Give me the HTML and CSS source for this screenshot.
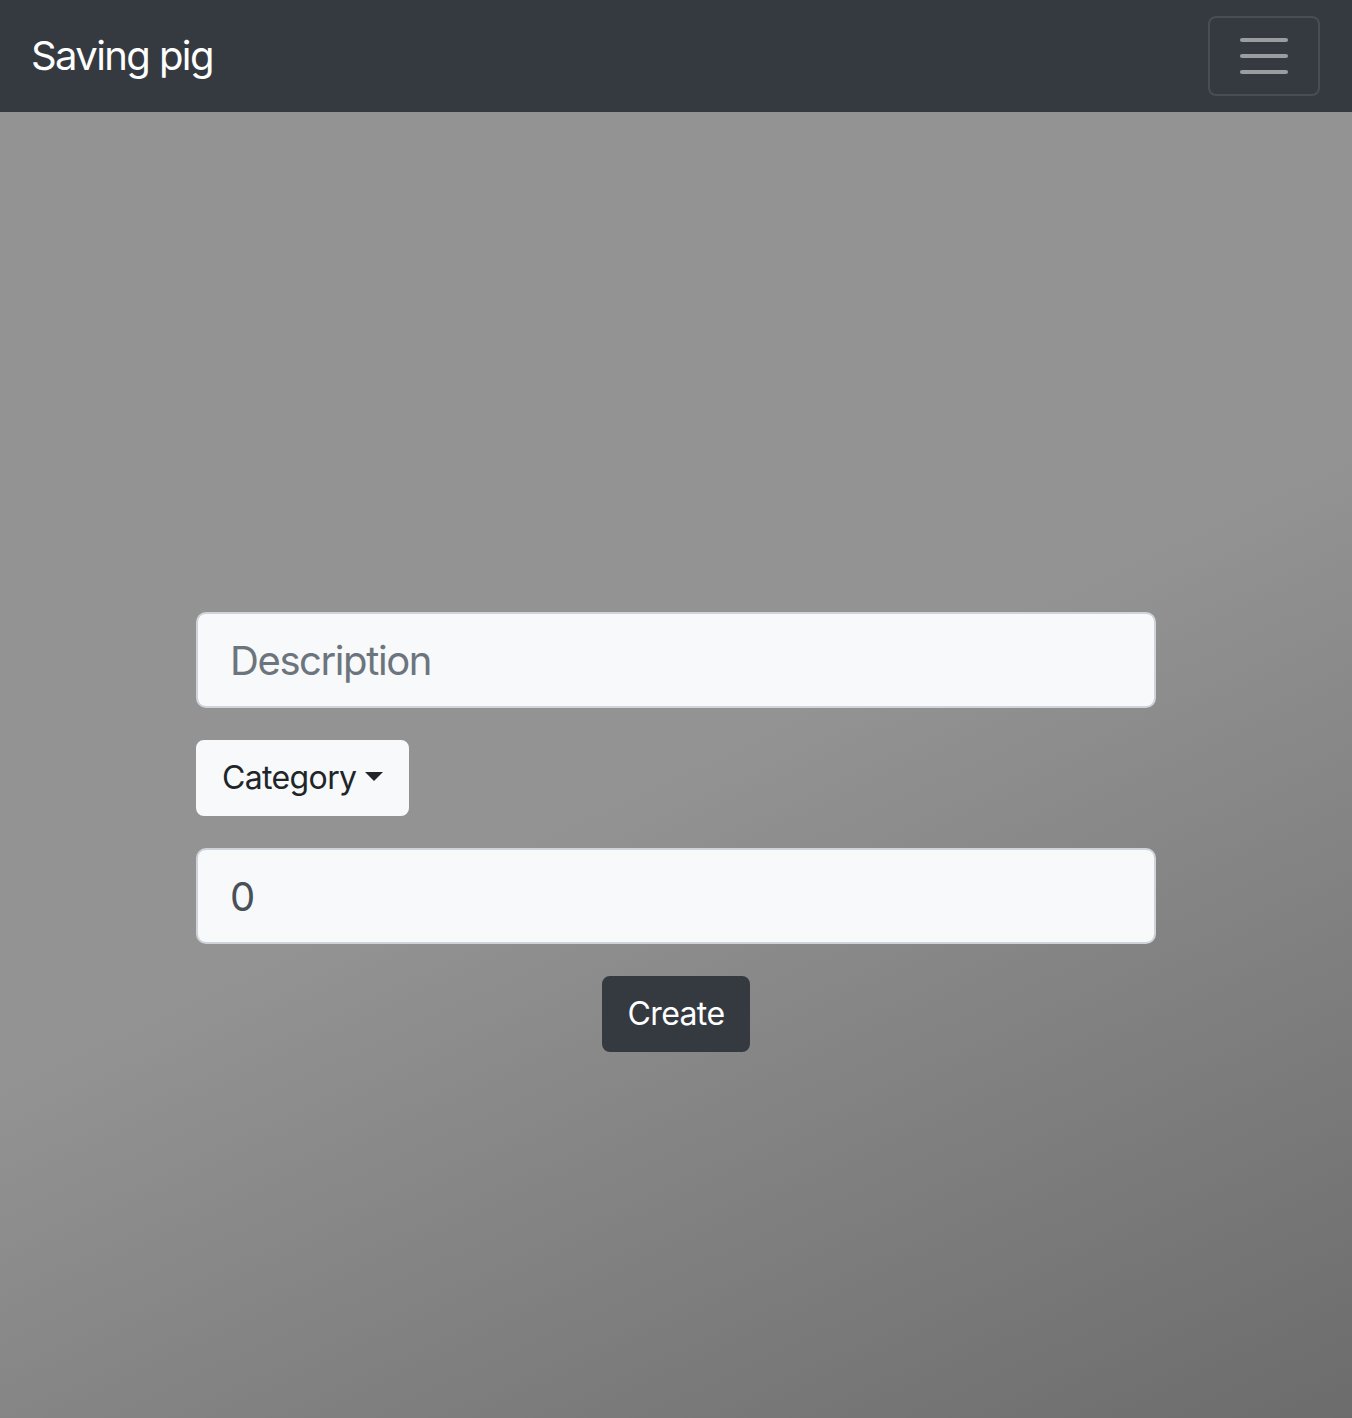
FILE: index.html
```html
<!DOCTYPE html>
<html lang="en">
<head>
<meta charset="utf-8">
<title>Saving pig</title>
<link rel="stylesheet" href="styles.css">
</head>
<body>
<nav class="navbar">
  <a class="brand" href="#">Saving pig</a>
  <button class="toggler" type="button" aria-label="Toggle navigation">
    <svg class="toggler-icon" width="60" height="60" viewBox="0 0 30 30" xmlns="http://www.w3.org/2000/svg">
      <path stroke="rgba(255,255,255,0.5)" stroke-linecap="round" stroke-miterlimit="10" stroke-width="2" d="M4 7h22M4 15h22M4 23h22"/>
    </svg>
  </button>
</nav>
<main class="main">
  <form class="form">
    <input class="field" type="text" placeholder="Description">
    <div class="dropdown">
      <button class="btn btn-light dropdown-toggle" type="button">Category</button>
    </div>
    <input class="field field-number" type="text" value="0">
    <div class="actions">
      <button class="btn btn-dark" type="button">Create</button>
    </div>
  </form>
</main>
</body>
</html>
```

FILE: styles.css
```css
* { box-sizing: border-box; }

html, body {
  margin: 0;
  padding: 0;
}

body {
  font-family: Inter, "Noto Sans", "Liberation Sans", sans-serif;
  color: #212529;
  min-height: 1418px;
  display: flex;
  flex-direction: column;
  background: #939393;
}

.navbar {
  height: 112px;
  background: #343a40;
  display: flex;
  align-items: center;
  justify-content: space-between;
  padding: 16px 32px;
  flex-shrink: 0;
}

.brand {
  color: #ffffff;
  font-size: 40px;
  line-height: 60px;
  letter-spacing: -0.04em;
  padding: 10px 0;
  text-decoration: none;
  margin-left: -1px;
}

.toggler {
  width: 112px;
  height: 80px;
  padding: 8px 24px;
  background: transparent;
  border: 2px solid rgba(255, 255, 255, 0.1);
  border-radius: 8px;
  display: flex;
  align-items: center;
  justify-content: center;
}

.toggler-icon { display: block; }

.main {
  flex: 1;
  background: linear-gradient(155deg, #939393 50%, #6c6c6c 100%);
  padding-top: 500px;
}

.form {
  width: 960px;
  margin: 0 auto;
  display: flex;
  flex-direction: column;
  gap: 32px;
}

.field {
  display: block;
  width: 100%;
  height: 96px;
  padding: 0 32px;
  font-family: inherit;
  font-size: 40px;
  letter-spacing: -0.035em;
  color: #495057;
  background: #f8f9fa;
  border: 2px solid #ced4da;
  border-radius: 10px;
  outline: none;
}

.field::placeholder { color: #6c757d; opacity: 1; }

.dropdown { display: flex; }

.btn {
  font-family: inherit;
  font-size: 32px;
  line-height: 48px;
  letter-spacing: -0.02em;
  padding: 12px 24px;
  border: 2px solid transparent;
  border-radius: 8px;
  cursor: pointer;
}

.btn-light {
  background: #f8f9fa;
  border-color: #f8f9fa;
  color: #212529;
}

.dropdown-toggle::after {
  content: "";
  display: inline-block;
  margin-left: 0.255em;
  vertical-align: 0.255em;
  border-top: 0.3em solid;
  border-right: 0.3em solid transparent;
  border-left: 0.3em solid transparent;
  border-bottom: 0;
}

.actions {
  display: flex;
  justify-content: center;
}

.btn-dark {
  background: #343a40;
  border-color: #343a40;
  color: #ffffff;
}
```
